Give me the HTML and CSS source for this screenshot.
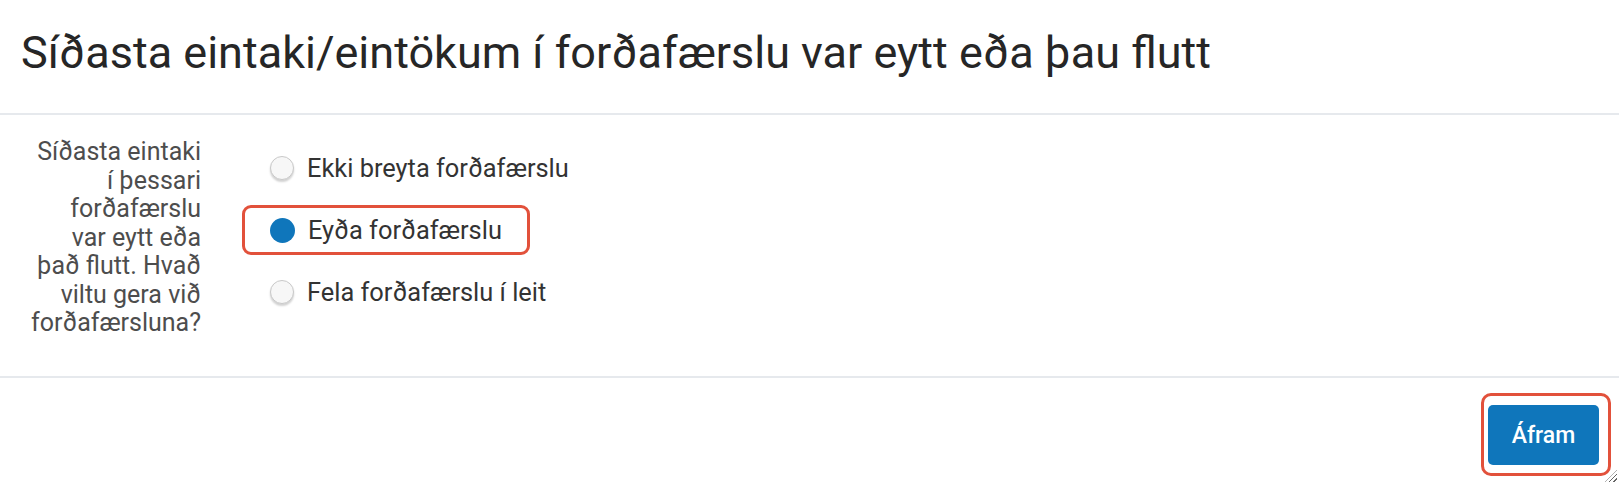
FILE: index.html
```html
<!DOCTYPE html>
<html lang="is">
<head>
<meta charset="utf-8">
<title>Forðafærsla</title>
<link rel="stylesheet" href="styles.css">
</head>
<body>
<div class="dialog">
  <header class="dialog-header">
    <h1 class="dialog-title">Síðasta eintaki/eintökum í forðafærslu var eytt eða þau flutt</h1>
  </header>
  <main class="dialog-body">
    <div class="question">Síðasta eintaki<br>í þessari<br>forðafærslu<br>var eytt eða<br>það flutt. Hvað<br>viltu gera við<br>forðafærsluna?</div>
    <div class="options">
      <label class="option">
        <span class="radio"></span>
        <span class="option-text">Ekki breyta forðafærslu</span>
      </label>
      <label class="option option-selected">
        <span class="radio radio-checked"></span>
        <span class="option-text">Eyða forðafærslu</span>
      </label>
      <label class="option">
        <span class="radio"></span>
        <span class="option-text">Fela forðafærslu í leit</span>
      </label>
    </div>
  </main>
  <footer class="dialog-footer">
    <div class="btn-highlight">
      <button class="btn-primary" type="button">Áfram</button>
    </div>
    <span class="grip"></span>
  </footer>
</div>
</body>
</html>
```
FILE: styles.css
```css
html, body {
  margin: 0;
  padding: 0;
  background: #ffffff;
}
body {
  font-family: Roboto, "Liberation Sans", Arial, sans-serif;
  color: #333333;
}
.dialog {
  width: 1619px;
  height: 484px;
  position: relative;
  overflow: hidden;
}
.dialog-header {
  height: 115px;
  border-bottom: 2px solid #e6e9ed;
  box-sizing: border-box;
  padding: 30px 0 0 21px;
}
.dialog-title {
  margin: 0;
  font-size: 45px;
  font-weight: 400;
  color: #262626;
  line-height: 45px;
}
.dialog-body {
  height: 263px;
  border-bottom: 2px solid #e6e9ed;
  box-sizing: border-box;
  display: flex;
  align-items: flex-start;
  padding-top: 23px;
}
.question {
  width: 180px;
  margin-left: 21px;
  text-align: right;
  font-size: 25px;
  line-height: 28.5px;
  color: #4d4d4d;
  white-space: nowrap;
}
.options {
  margin-left: 41px;
  margin-top: 5px;
  display: flex;
  flex-direction: column;
  gap: 12px;
}
.option {
  display: flex;
  align-items: center;
  gap: 13px;
  width: 288px;
  height: 50px;
  box-sizing: border-box;
  padding-left: 25px;
  border: 3px solid transparent;
  border-radius: 9px;
  font-size: 25.4px;
  color: #333333;
  white-space: nowrap;
}
.option-selected {
  border-color: #e2513b;
}
.radio {
  width: 24px;
  height: 24px;
  border-radius: 50%;
  box-sizing: border-box;
  border: 1px solid #c9c9c9;
  background: #f7f7f7;
  box-shadow: 0 2px 2px rgba(0, 0, 0, 0.18);
  flex: none;
}
.radio-checked {
  width: 25px;
  height: 25px;
  border: none;
  background: #0f76bb;
  box-shadow: none;
}
.dialog-footer {
  height: 106px;
  display: flex;
  justify-content: flex-end;
  align-items: flex-start;
  padding-top: 15px;
  padding-right: 8px;
  box-sizing: border-box;
}
.btn-highlight {
  border: 3px solid #e2513b;
  border-radius: 10px;
  padding: 9px 9px 8px 4px;
}
.btn-primary {
  display: block;
  width: 111px;
  height: 60px;
  border: none;
  border-radius: 5px;
  background: #0f76bb;
  color: #ffffff;
  font-family: Roboto, "Liberation Sans", Arial, sans-serif;
  font-size: 23px;
  font-weight: 500;
}
.grip {
  position: absolute;
  right: 2px;
  bottom: 2px;
  width: 12px;
  height: 12px;
  background: repeating-linear-gradient(135deg, transparent 0 2px, #666 2px 3px);
  clip-path: polygon(100% 0, 100% 100%, 0 100%);
}
```
